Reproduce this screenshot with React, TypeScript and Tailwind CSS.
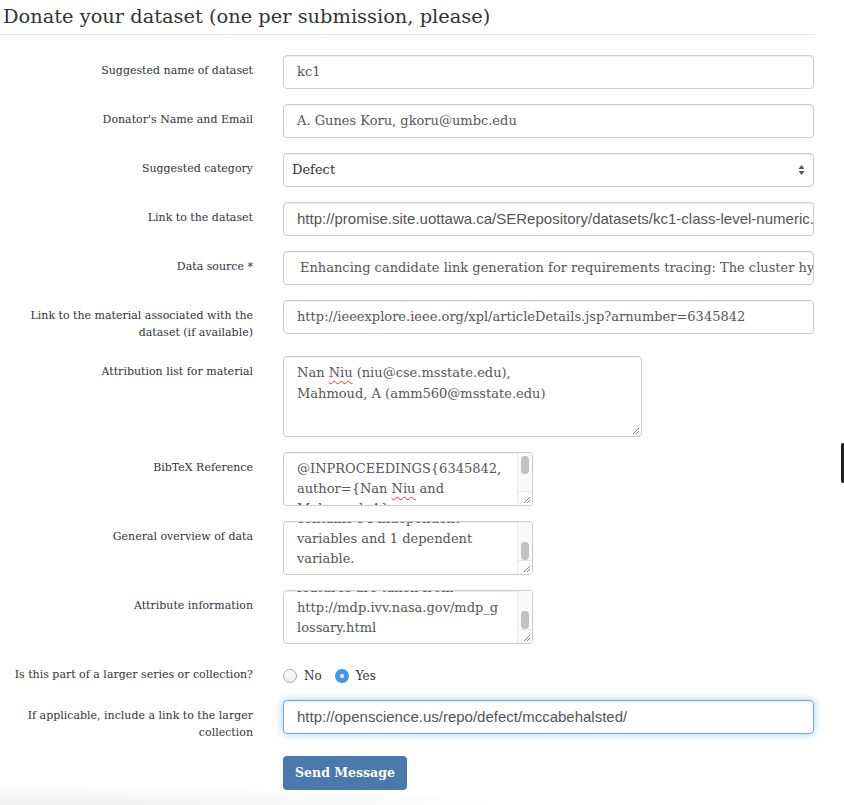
import React from 'react';

const labelCls = "w-[268px] shrink-0 pr-[15px] pt-[7px] text-right text-[11px] leading-[17px] text-[#333]";
const inputCls = "h-[34px] w-full flex items-center rounded-[4px] border border-[#ccc] bg-white px-[13px] text-[13px] text-[#555] overflow-hidden whitespace-nowrap shadow-[inset_0_1px_1px_rgba(0,0,0,0.075)]";

const Row: React.FC<{ label: React.ReactNode; children: React.ReactNode }> = ({ label, children }) => (
  <div className="flex mb-[15px]">
    <div className={labelCls}>{label}</div>
    <div className="w-[547px] pl-[15px] pr-[1px]">{children}</div>
  </div>
);

// little diagonal grip drawn by the browser in the corner of a textarea
const Grip = () => (
  <svg width="8" height="8" viewBox="0 0 8 8" className="block">
    <path d="M7 1 L1 7 M7 4 L4 7" stroke="#888" strokeWidth="1" />
  </svg>
);

const ScrollArea: React.FC<{ lines: React.ReactNode[]; offset: number; thumbTop: number }> = ({ lines, offset, thumbTop }) => (
  <div className="h-[54px] w-[250px] flex rounded-[4px] border border-[#ccc] bg-white overflow-hidden shadow-[inset_0_1px_1px_rgba(0,0,0,0.075)]">
    <div className="flex-1 overflow-hidden pl-[13px] pt-[6px] text-[13px] leading-[20px] text-[#555] whitespace-nowrap">
      <div style={{ marginTop: -offset }}>
        {lines.map((l, i) => (
          <div key={i}>{l}</div>
        ))}
      </div>
    </div>
    <div className="w-[15px] flex flex-col border-l border-[#e8e8e8] bg-[#fafafa]">
      <div className="flex-1">
        <div className="mx-auto w-[8px] h-[18px] rounded-full bg-[#c2c2c2]" style={{ marginTop: thumbTop }} />
      </div>
      <div className="h-[14px] border-t border-[#e8e8e8] flex items-end justify-end pr-[1px] pb-[1px]">
        <Grip />
      </div>
    </div>
  </div>
);

const Squiggle: React.FC<{ children: React.ReactNode }> = ({ children }) => (
  <span className="underline decoration-wavy decoration-[#e0362b] decoration-[1px] underline-offset-[3px]">{children}</span>
);

const App: React.FC = () => {
  return (
    <div className="relative w-full h-[805px] overflow-hidden bg-white font-['DejaVu_Serif',serif] text-[#333]">
      <div className="w-[815px]">
        <h2 className="pl-[3px] pt-[5px] pb-[5px] text-[19.4px] leading-[24px] text-[#333] border-b border-[#e5e5e5]">
          Donate your dataset (one per submission, please)
        </h2>

        <form className="pt-[20px]">
          <Row label="Suggested name of dataset">
            <div className={inputCls}>kc1</div>
          </Row>
          <Row label="Donator's Name and Email">
            <div className={inputCls}>A. Gunes Koru, gkoru@umbc.edu</div>
          </Row>
          <Row label="Suggested category">
            <div className="h-[34px] w-full flex items-center justify-between rounded-[4px] border border-[#ccc] bg-white pl-[8px] pr-[8px] text-[13px] text-[#333] shadow-[inset_0_1px_1px_rgba(0,0,0,0.075)]">
              <span>Defect</span>
              <svg width="7" height="12" viewBox="0 0 7 12">
                <path d="M3.5 1 L6.5 5 L0.5 5 Z M3.5 11 L6.5 7 L0.5 7 Z" fill="#555" />
              </svg>
            </div>
          </Row>
          <Row label="Link to the dataset">
            <div className={inputCls + " text-[15px] font-['Liberation_Sans',sans-serif]"}>
              http://promise.site.uottawa.ca/SERepository/datasets/kc1-class-level-numeric.arff
            </div>
          </Row>
          <Row label="Data source *">
            <div className={inputCls + " pl-[16px]"}>
              Enhancing candidate link generation for requirements tracing: The cluster hypothesis revisited
            </div>
          </Row>
          <Row label={<>Link to the material associated with the<br />dataset (if available)</>}>
            <div className={inputCls}>http://ieeexplore.ieee.org/xpl/articleDetails.jsp?arnumber=6345842</div>
          </Row>
          <Row label="Attribution list for material">
            <div className="h-[81px] w-[359px] flex flex-col rounded-[4px] border border-[#ccc] bg-white shadow-[inset_0_1px_1px_rgba(0,0,0,0.075)]">
              <div className="flex-1 pl-[13px] pt-[5px] text-[13px] leading-[21px] text-[#555] whitespace-nowrap">
                <div>Nan <Squiggle>Niu</Squiggle> (niu@cse.msstate.edu),</div>
                <div>Mahmoud, A (amm560@msstate.edu)</div>
              </div>
              <div className="flex justify-end pr-[1px] pb-[1px]">
                <Grip />
              </div>
            </div>
          </Row>
          <Row label="BibTeX Reference">
            <ScrollArea
              offset={0}
              thumbTop={3}
              lines={[
                '@INPROCEEDINGS{6345842,',
                <>author={'{'}Nan <Squiggle>Niu</Squiggle> and</>,
                'Mahmoud, A},',
              ]}
            />
          </Row>
          <Row label="General overview of data">
            <ScrollArea
              offset={19}
              thumbTop={20}
              lines={['contains 94 independent', 'variables and 1 dependent', 'variable.']}
            />
          </Row>
          <Row label="Attribute information">
            <ScrollArea
              offset={19}
              thumbTop={20}
              lines={['features are taken from', 'http://mdp.ivv.nasa.gov/mdp_g', 'lossary.html']}
            />
          </Row>
          <Row label="Is this part of a larger series or collection?">
            <div className="flex items-center pt-[8px] text-[12px] text-[#333]">
              <span className="w-[14px] h-[14px] rounded-full border border-[#aaa] bg-gradient-to-b from-white to-[#ececec]" />
              <span className="ml-[7px]">No</span>
              <span className="ml-[13px] w-[14px] h-[14px] rounded-full bg-[#3d97f5] flex items-center justify-center">
                <span className="w-[4px] h-[4px] rounded-full bg-white" />
              </span>
              <span className="ml-[7px]">Yes</span>
            </div>
          </Row>
          <Row label={<>If applicable, include a link to the larger<br />collection</>}>
            <div className="h-[34px] w-full flex items-center rounded-[4px] border border-[#66afe9] bg-white px-[13px] text-[15px] text-[#555] font-['Liberation_Sans',sans-serif] shadow-[inset_0_1px_1px_rgba(0,0,0,0.075),0_0_8px_rgba(102,175,233,0.6)]">
              http://openscience.us/repo/defect/mccabehalsted/
            </div>
          </Row>
          <div className="pl-[283px]">
            <button type="button" className="h-[34px] w-[124px] rounded-[4px] bg-[#4a7aab] text-white text-[12.5px] font-bold">
              Send Message
            </button>
          </div>
        </form>
      </div>

      <div className="absolute left-0 bottom-0 w-[520px] h-[20px] bg-[radial-gradient(ellipse_at_bottom_left,#eeeeee,transparent_70%)]" />
      <div className="absolute right-0 top-[443px] w-[3px] h-[40px] rounded-l-[2px] bg-[#222]" />
    </div>
  );
};

export default App;
